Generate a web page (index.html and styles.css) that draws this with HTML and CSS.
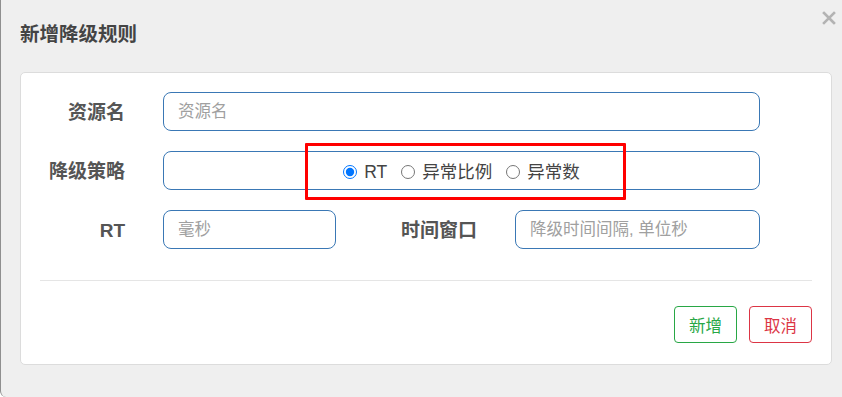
FILE: index.html
```html
<!DOCTYPE html>
<html lang="zh-CN">
<head>
<meta charset="utf-8">
<title>新增降级规则</title>
<link rel="stylesheet" href="styles.css">
</head>
<body>
<div class="modal">
  <div class="modal-header">
    <h4 class="modal-title">新增降级规则</h4>
    <button class="close" type="button" aria-label="关闭">
      <svg width="14" height="14" viewBox="0 0 14 14"><path d="M2 2 L12 12 M12 2 L2 12" stroke="#b3b3b3" stroke-width="2.6" stroke-linecap="square" fill="none"/></svg>
    </button>
  </div>
  <div class="panel">
    <form class="form">
      <div class="row">
        <label class="label">资源名</label>
        <input class="input input-full" type="text" placeholder="资源名">
      </div>
      <div class="row">
        <label class="label">降级策略</label>
        <div class="input input-full radios">
          <label class="radio"><input type="radio" name="grade" checked><span>RT</span></label>
          <label class="radio"><input type="radio" name="grade"><span>异常比例</span></label>
          <label class="radio"><input type="radio" name="grade"><span>异常数</span></label>
        </div>
      </div>
      <div class="row">
        <label class="label">RT</label>
        <input class="input input-rt" type="text" placeholder="毫秒">
        <label class="label label-wide">时间窗口</label>
        <input class="input input-window" type="text" placeholder="降级时间间隔, 单位秒">
      </div>
    </form>
    <hr class="divider">
    <div class="actions">
      <button class="btn btn-success" type="button">新增</button>
      <button class="btn btn-danger" type="button">取消</button>
    </div>
  </div>
  <div class="highlight"></div>
</div>
</body>
</html>
```
FILE: styles.css
```css
* { box-sizing: border-box; }
html, body {
  margin: 0;
  padding: 0;
  background: #ffffff;
}
body {
  font-family: "Liberation Sans", "Noto Sans CJK SC", sans-serif;
  width: 842px;
  height: 397px;
  overflow: hidden;
}
.modal {
  position: relative;
  height: 397px;
  background: #efefef;
  border-left: 1px solid #8f8f8f;
  border-bottom-left-radius: 6px;
  padding: 0 9px 0 19px;
}
.modal-header {
  height: 72px;
  padding-top: 20px;
}
.modal-title {
  margin: 0;
  font-family: "Noto Sans CJK SC", sans-serif;
  font-size: 19.5px;
  line-height: 26px;
  font-weight: 700;
  color: #444444;
}
.close {
  position: absolute;
  top: 11px;
  right: 6px;
  width: 14px;
  height: 14px;
  padding: 0;
  border: 0;
  background: transparent;
  line-height: 0;
}
.panel {
  width: 812px;
  height: 293px;
  background: #ffffff;
  border: 1px solid #dcdcdc;
  border-radius: 5px;
  padding: 19px 19px 20px 19px;
}
.form {
  display: flex;
  flex-direction: column;
  gap: 20px;
  padding-right: 52px;
}
.row {
  display: flex;
  align-items: center;
  height: 39px;
}
.label {
  flex: none;
  width: 85px;
  margin-right: 38px;
  text-align: right;
  font-family: "Liberation Sans", "Noto Sans CJK SC", sans-serif;
  font-size: 19px;
  font-weight: 700;
  color: #555555;
  line-height: 24px;
  padding-top: 2px;
}
.label-wide {
  width: 141px;
}
.input {
  height: 39px;
  border: 1px solid #3a78b5;
  border-radius: 8px;
  background: #ffffff;
  padding: 0 14px;
  font-family: "Liberation Sans", "Noto Sans CJK SC", sans-serif;
  font-size: 16.5px;
  color: #333333;
  outline: none;
}
.input::placeholder {
  color: #a0a0a0;
}
.input-full { flex: 1; }
.input-rt { width: 173px; flex: none; }
.input-window { width: 245px; flex: none; }
.radios {
  display: flex;
  align-items: center;
  justify-content: center;
  gap: 14px;
  padding-top: 3px;
}
.radio {
  display: flex;
  align-items: center;
  gap: 7px;
  font-size: 17.5px;
  color: #444444;
  line-height: 22px;
}
.radio input {
  margin: 0;
  width: 14px;
  height: 14px;
}
.divider {
  margin: 31px 0 0 0;
  border: 0;
  border-top: 1px solid #e5e5e5;
  height: 0;
}
.actions {
  display: flex;
  justify-content: flex-end;
  gap: 12px;
  margin-top: 25px;
}
.btn {
  width: 63px;
  height: 37px;
  padding: 0;
  background: #ffffff;
  border-radius: 4px;
  font-family: "Noto Sans CJK SC", sans-serif;
  font-size: 16.5px;
  line-height: 20px;
}
.btn-success {
  border: 1px solid #28a745;
  color: #28a745;
}
.btn-danger {
  border: 1px solid #dc3545;
  color: #dc3545;
}
.highlight {
  position: absolute;
  left: 304px;
  top: 143px;
  width: 321px;
  height: 57px;
  border: 3px solid #ff0000;
  border-radius: 1px;
  pointer-events: none;
}
```
